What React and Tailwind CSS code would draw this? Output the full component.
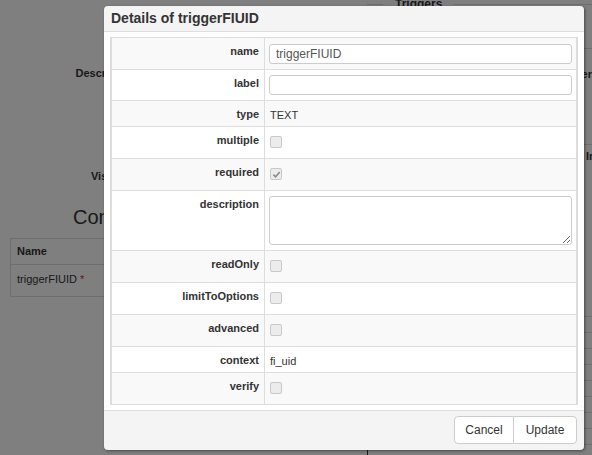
import { useState } from "react";

// Property rows of the details dialog, in table order
const fields = [
  { label: "name", h: "h-[32px]", kind: "input", value: "triggerFIUID" },
  { label: "label", h: "h-[31px]", kind: "input", value: "", pt: "pt-[5px]" },
  { label: "type", h: "h-[26px]", kind: "text", value: "TEXT" },
  { label: "multiple", h: "h-[32px]", kind: "check", value: false },
  { label: "required", h: "h-[32px]", kind: "check", value: true },
  { label: "description", h: "h-[60px]", kind: "textarea", value: "", pt: "pt-[5px]" },
  { label: "readOnly", h: "h-[32px]", kind: "check", value: false },
  { label: "limitToOptions", h: "h-[32px]", kind: "check", value: false },
  { label: "advanced", h: "h-[32px]", kind: "check", value: false },
  { label: "context", h: "h-[26px]", kind: "text", value: "fi_uid" },
  { label: "verify", h: "h-[32px]", kind: "check", value: false },
];

function Check({ checked }) {
  return (
    <span className="ml-[1px] mt-[3px] flex h-[12px] w-[12px] items-center justify-center rounded-[2px] border border-[#c9c9c9] bg-[#ececec]">
      {checked && (
        <svg viewBox="0 0 10 10" className="h-[9px] w-[9px]">
          <path d="M1.5 5.2 L4 7.6 L8.6 2.2" fill="none" stroke="#8c8c8c" strokeWidth="1.8" />
        </svg>
      )}
    </span>
  );
}

function FieldValue({ field }) {
  if (field.kind === "input") {
    return (
      <input
        readOnly
        value={field.value}
        className="block h-[20px] w-full rounded-[3px] border border-[#ccc] bg-white px-[6px] text-[12px] text-[#555] outline-none"
      />
    );
  }
  if (field.kind === "textarea") {
    return (
      <textarea
        readOnly
        value={field.value}
        className="block h-[49px] w-full resize-y rounded-[3px] border border-[#ccc] bg-white px-[6px] text-[12px] text-[#555] outline-none"
      />
    );
  }
  if (field.kind === "check") return <Check checked={field.value} />;
  return <span className="pl-[1px] leading-[15px] text-[#333]">{field.value}</span>;
}

function DetailsDialog() {
  return (
    <div className="absolute left-[104px] top-[6px] w-[480px] overflow-hidden rounded-[4px] shadow-[1px_1px_3px_rgba(0,0,0,0.45)]">
      <div className="flex h-[26px] items-center border-b border-[#dedede] bg-[#f4f4f4] px-[7px]">
        <h3 className="text-[14px] font-bold text-[#333]">Details of triggerFIUID</h3>
      </div>

      <div className="bg-white px-[6px] py-[5px]">
        <div className="border-x-2 border-t border-[#ddd] text-[11px]">
          {fields.map((f, i) => (
            <div
              key={f.label}
              className={`flex border-b border-[#ddd] ${f.h} ${i % 2 === 0 ? "bg-[#f9f9f9]" : "bg-white"}`}
            >
              <div className="w-[153px] shrink-0 border-r border-[#ddd] pr-[5px] pt-[6px] text-right font-bold leading-[15px] text-[#333]">
                {f.label}
              </div>
              <div className={`flex-1 px-[4px] ${f.pt || "pt-[6px]"}`}>
                <FieldValue field={f} />
              </div>
            </div>
          ))}
        </div>
      </div>

      <div className="flex justify-end border-t border-[#ddd] bg-[#f4f4f4] px-[7px] pb-[6px] pt-[5px]">
        <div className="flex">
          <button className="h-[28px] w-[60px] rounded-l-[4px] border border-[#ccc] bg-white text-[12px] text-[#333]">
            Cancel
          </button>
          <button className="-ml-px h-[28px] w-[64px] rounded-r-[4px] border border-[#ccc] bg-white text-[12px] text-[#333]">
            Update
          </button>
        </div>
      </div>
    </div>
  );
}

export default function App() {
  const [open] = useState(true);

  return (
    <div className="relative h-[455px] w-[592px] overflow-hidden bg-white font-['Liberation_Sans',Arial,sans-serif] text-[#333]">
      {/* page behind the modal */}
      <div className="flex h-full">
        <div className="w-[367px] shrink-0">
          <div className="mt-[66px] flex">
            <label className="w-[136px] text-right text-[11px] font-bold leading-[15px]">Description</label>
          </div>
          <div className="mt-[88px] flex">
            <label className="w-[136px] text-right text-[11px] font-bold leading-[15px]">Visibility</label>
          </div>
          <h2 className="mt-[21px] pl-[73px] text-[20px] leading-[24px]">Context parameters</h2>
          <div className="ml-[10px] mr-[10px] mt-[9px] border border-[#ddd] text-[11px]">
            <div className="flex h-[26px] items-center border-b border-[#ddd] px-[6px] font-bold">Name</div>
            <div className="h-[31px] px-[6px] pt-[7px] leading-[15px]">
              triggerFIUID <span className="text-[#c0392b]">*</span>
            </div>
          </div>
        </div>

        <div className="min-w-0 flex-1">
          <div className="-mt-[4px] flex items-center">
            <span className="h-px w-[16px] bg-[#ddd]" />
            <span className="px-[12px] text-[12px] font-bold leading-[16px]">Triggers</span>
            <span className="h-px flex-1 bg-[#ddd]" />
          </div>
          <div className="h-[451px] border-l border-[#333]">
            <div className="h-[37px] border-b border-[#ddd]" />
            <div className="flex h-[96px] justify-end border-b border-[#ddd] pt-[18px]">
              <span className="text-[11px] font-bold leading-[15px]">Parameter</span>
            </div>
            <div className="h-[156px] pl-[218px] pt-[4px] text-[11px] font-bold leading-[15px]">In</div>
            {Array.from({ length: 9 }).map((_, i) => (
              <div key={i} className="h-[16px] border-b border-[#ddd]" />
            ))}
          </div>
        </div>
      </div>

      {open && <div className="absolute inset-0 bg-black/50" />}
      {open && <DetailsDialog />}
    </div>
  );
}
